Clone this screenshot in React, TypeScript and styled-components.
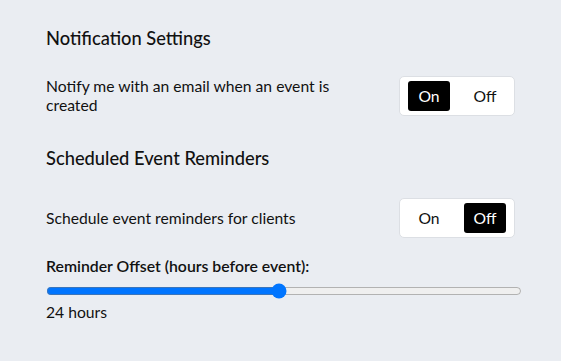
import { useState } from "react";
import styled, { createGlobalStyle } from "styled-components";

const GlobalStyle = createGlobalStyle`
  body {
    margin: 0;
    background: #eaedf2;
    font-family: Lato, "Noto Sans", sans-serif;
    color: #111;
  }
`;

const Page = styled.div`
  padding: 26px 46px 20px;
  width: 469px;
`;

const Heading = styled.h2<{ $top?: number }>`
  margin: ${(p) => p.$top ?? 0}px 0 0;
  font-size: 18.3px;
  font-weight: 500;
  line-height: 24px;
`;

const Row = styled.div<{ $top: number }>`
  margin-top: ${(p) => p.$top}px;
  display: flex;
  align-items: center;
  justify-content: space-between;
  height: 40px;
`;

const RowText = styled.div`
  max-width: 300px;
  font-size: 15.7px;
  line-height: 19px;
`;

const Toggle = styled.div`
  display: flex;
  gap: 14px;
  padding: 4px 8px;
  background: #fff;
  border: 1px solid #dcdfe4;
  border-radius: 5px;
`;

const ToggleButton = styled.button<{ $active: boolean }>`
  width: 42px;
  height: 30px;
  border: none;
  border-radius: 3px;
  padding: 0;
  font-family: inherit;
  font-size: 15.7px;
  cursor: pointer;
  background: ${(p) => (p.$active ? "#000" : "transparent")};
  color: ${(p) => (p.$active ? "#fff" : "#111")};
`;

const SliderLabel = styled.div`
  margin-top: 18px;
  font-size: 15.8px;
  font-weight: 600;
  line-height: 20px;
`;

const Slider = styled.input`
  display: block;
  margin: 7px 0 0;
  width: 476px;
  height: 16px;
  accent-color: #0075ff;
`;

const SliderValue = styled.div`
  margin-top: 3px;
  font-size: 15.7px;
  line-height: 20px;
`;

type ToggleProps = { value: boolean; onChange: (v: boolean) => void };

const OnOffToggle = ({ value, onChange }: ToggleProps) => (
  <Toggle>
    <ToggleButton $active={value} onClick={() => onChange(true)}>
      On
    </ToggleButton>
    <ToggleButton $active={!value} onClick={() => onChange(false)}>
      Off
    </ToggleButton>
  </Toggle>
);

const App = () => {
  const [notify, setNotify] = useState(true);
  const [remind, setRemind] = useState(false);
  const [hours, setHours] = useState(24);

  return (
    <Page>
      <GlobalStyle />
      <Heading>Notification Settings</Heading>
      <Row $top={26}>
        <RowText>Notify me with an email when an event is created</RowText>
        <OnOffToggle value={notify} onChange={setNotify} />
      </Row>
      <Heading $top={30}>Scheduled Event Reminders</Heading>
      <Row $top={28}>
        <RowText>Schedule event reminders for clients</RowText>
        <OnOffToggle value={remind} onChange={setRemind} />
      </Row>
      <SliderLabel>Reminder Offset (hours before event):</SliderLabel>
      <Slider
        type="range"
        min={1}
        max={48}
        value={hours}
        onChange={(e) => setHours(Number(e.target.value))}
      />
      <SliderValue>{hours} hours</SliderValue>
    </Page>
  );
};

export default App;
